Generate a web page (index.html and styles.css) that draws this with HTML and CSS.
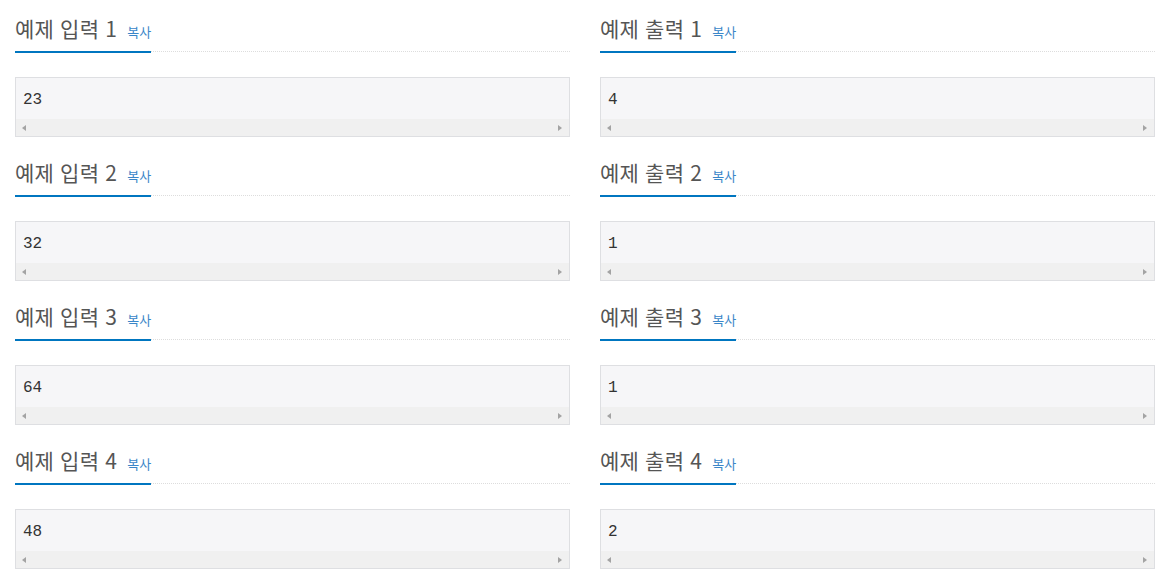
FILE: index.html
```html
<!DOCTYPE html>
<html lang="ko">
<head>
<meta charset="utf-8">
<link rel="stylesheet" href="styles.css">
</head>
<body>
<div class="samples">
  <section class="sample">
    <div class="headline"><h2>예제 입력 1 <span class="copy">복사</span></h2></div>
    <div class="pre"><div class="pre-text">23</div><div class="hscroll"><span class="arrow-l"></span><span class="arrow-r"></span></div></div>
  </section>
  <section class="sample">
    <div class="headline"><h2>예제 출력 1 <span class="copy">복사</span></h2></div>
    <div class="pre"><div class="pre-text">4</div><div class="hscroll"><span class="arrow-l"></span><span class="arrow-r"></span></div></div>
  </section>
  <section class="sample">
    <div class="headline"><h2>예제 입력 2 <span class="copy">복사</span></h2></div>
    <div class="pre"><div class="pre-text">32</div><div class="hscroll"><span class="arrow-l"></span><span class="arrow-r"></span></div></div>
  </section>
  <section class="sample">
    <div class="headline"><h2>예제 출력 2 <span class="copy">복사</span></h2></div>
    <div class="pre"><div class="pre-text">1</div><div class="hscroll"><span class="arrow-l"></span><span class="arrow-r"></span></div></div>
  </section>
  <section class="sample">
    <div class="headline"><h2>예제 입력 3 <span class="copy">복사</span></h2></div>
    <div class="pre"><div class="pre-text">64</div><div class="hscroll"><span class="arrow-l"></span><span class="arrow-r"></span></div></div>
  </section>
  <section class="sample">
    <div class="headline"><h2>예제 출력 3 <span class="copy">복사</span></h2></div>
    <div class="pre"><div class="pre-text">1</div><div class="hscroll"><span class="arrow-l"></span><span class="arrow-r"></span></div></div>
  </section>
  <section class="sample">
    <div class="headline"><h2>예제 입력 4 <span class="copy">복사</span></h2></div>
    <div class="pre"><div class="pre-text">48</div><div class="hscroll"><span class="arrow-l"></span><span class="arrow-r"></span></div></div>
  </section>
  <section class="sample">
    <div class="headline"><h2>예제 출력 4 <span class="copy">복사</span></h2></div>
    <div class="pre"><div class="pre-text">2</div><div class="hscroll"><span class="arrow-l"></span><span class="arrow-r"></span></div></div>
  </section>
</div>
</body>
</html>
```

FILE: styles.css
```css
html, body {
  margin: 0;
  padding: 0;
  background: #ffffff;
}

body {
  font-family: "Noto Sans CJK KR", "Noto Sans", sans-serif;
  color: #555555;
}

.samples {
  display: grid;
  grid-template-columns: 555px 555px;
  column-gap: 30px;
  padding-left: 15px;
}

.sample {
  padding-top: 14px;
  padding-bottom: 7px;
}

.headline {
  border-bottom: 1px dotted #dddddd;
  margin-bottom: 25px;
}

.headline h2 {
  display: inline-block;
  margin: 0 0 -2px 0;
  padding: 0 0 9px 0;
  font-size: 21px;
  line-height: 28px;
  font-weight: 400;
  letter-spacing: 0.2px;
  color: #555555;
  border-bottom: 2px solid #0076c0;
}

.copy {
  font-size: 13px;
  line-height: 13px;
  letter-spacing: 0;
  color: #3a86c8;
  margin-left: 4px;
}

.pre {
  border: 1px solid #dedfe2;
  background: #f6f6f8;
}

.pre-text {
  font-family: "Liberation Mono", "DejaVu Sans Mono", monospace;
  font-size: 16px;
  line-height: 20px;
  color: #333333;
  padding: 12px 7px 9px;
  height: 20px;
}

.hscroll {
  height: 17px;
  background: #f0f0f0;
  display: flex;
  justify-content: space-between;
  align-items: center;
  padding: 0 7px 0 6px;
}

.arrow-l {
  width: 0;
  height: 0;
  border-top: 3.5px solid transparent;
  border-bottom: 3.5px solid transparent;
  border-right: 4px solid #a3a3a3;
}

.arrow-r {
  width: 0;
  height: 0;
  border-top: 3.5px solid transparent;
  border-bottom: 3.5px solid transparent;
  border-left: 4px solid #a3a3a3;
}
```
